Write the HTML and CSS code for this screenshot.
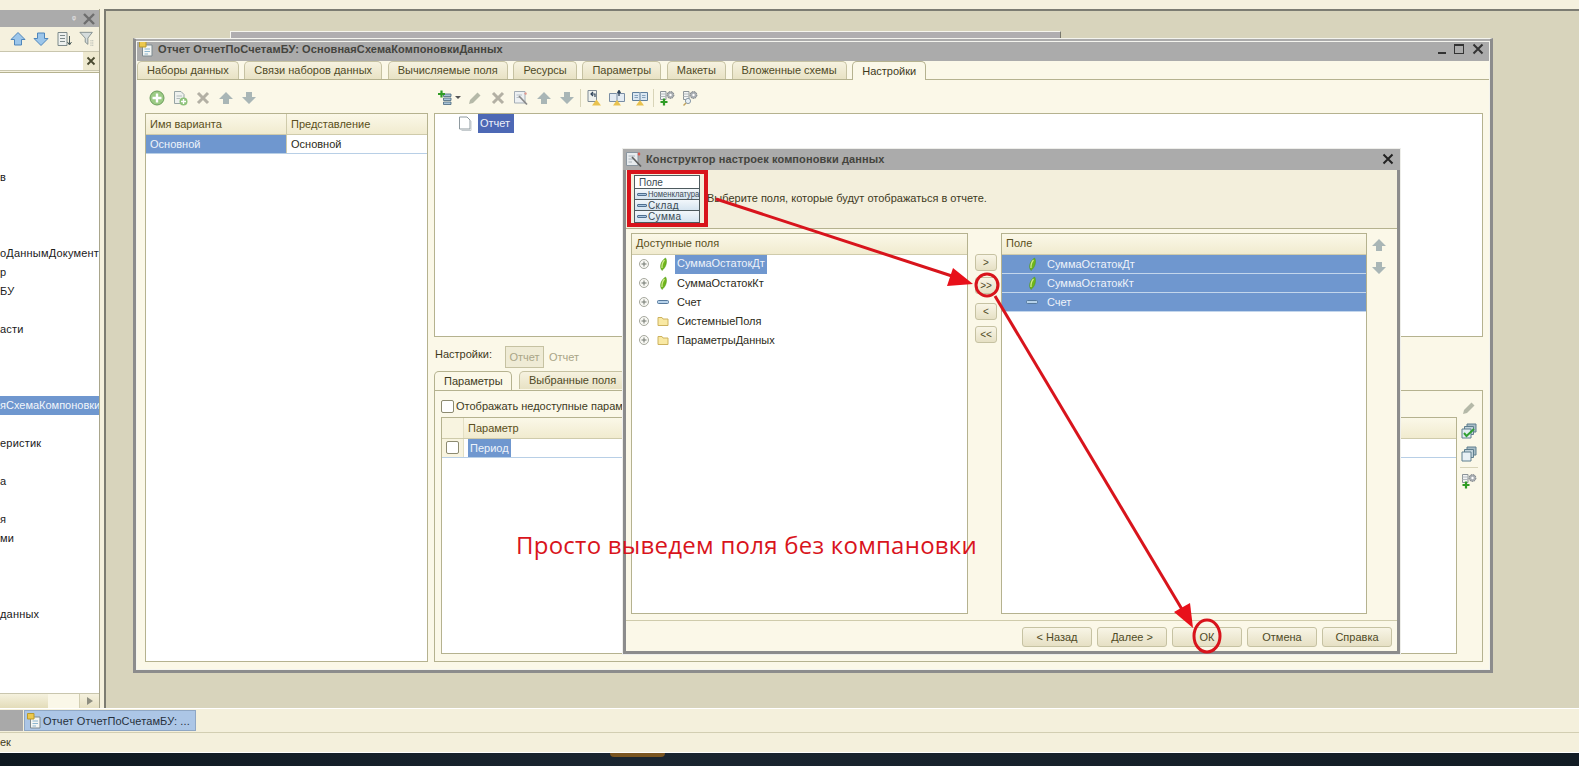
FILE: index.html
```html
<!DOCTYPE html>
<html lang="ru">
  <head>
    <meta charset="UTF-8" />
    <title>Отчет ОтчетПоСчетамБУ</title>
    <link rel="stylesheet" href="styles.css">
  </head>

  <body>
    <svg class="defs" width="0" height="0">
      <defs>
        <symbol id="i-blue-up" viewBox="0 0 16 16"><path d="M8 1.500 15 8.500H11.500V14H4.500V8.500H1Z" fill="#9cc6ea" stroke="#4f86bb"/></symbol>
        <symbol id="i-blue-down" viewBox="0 0 16 16"><path d="M8 14.500 15 7.500H11.500V2H4.500V7.500H1Z" fill="#9cc6ea" stroke="#4f86bb"/></symbol>
        <symbol id="i-list" viewBox="0 0 16 16"><path d="M2 1.500H11V14.500H2Z" fill="#eef1ee" stroke="#7d8a8a"/><path d="M4 4.500H9M4 7.500H9M4 10.500H9" stroke="#7d8a8a"/><path d="M13.500 5V13M11.500 11 13.500 14 15.500 11" fill="none" stroke="#4a5a5a"/></symbol>
        <symbol id="i-funnel" viewBox="0 0 18 18"><path d="M1 1.500H15L10 8V15L7 12.500V8Z" fill="#d5dcdc" stroke="#7d8a8a"/><path d="M13 11H17M13 13.500H17M13 16H17" stroke="#8c9898" stroke-dasharray="1 1"/></symbol>
        <symbol id="i-add" viewBox="0 0 16 16"><circle cx="8" cy="8" r="7" fill="#9ccb84" stroke="#6c9e5c"/><path d="M8 3.500V12.500M3.500 8H12.500" stroke="#fff" stroke-width="2.400"/></symbol>
        <symbol id="i-docadd" viewBox="0 0 16 16"><path d="M2.500 1.500H9L12 4.500V13.500H2.500Z" fill="#eef1ee" stroke="#98a5a5"/><path d="M4.500 6H10M4.500 8.500H8" stroke="#b3bcbc"/><circle cx="11.500" cy="11.500" r="4" fill="#8ec27a"/><path d="M11.500 9V14M9 11.500H14" stroke="#fff" stroke-width="1.400"/></symbol>
        <symbol id="i-del" viewBox="0 0 16 16"><path d="M3 3 13 13M13 3 3 13" stroke="#b3b0a4" stroke-width="3"/></symbol>
        <symbol id="i-up" viewBox="0 0 16 16"><path d="M8 2 15 9H11V14H5V9H1Z" fill="#a9b6b6"/></symbol>
        <symbol id="i-down" viewBox="0 0 16 16"><path d="M8 14 15 7H11V2H5V7H1Z" fill="#a9b6b6"/></symbol>
        <symbol id="i-tree-add" viewBox="0 0 16 16"><path d="M6.500 4H14V6.500H6.500ZM6.500 8H14V10.500H6.500ZM6.500 12H14V14.500H6.500Z" fill="#a9c4d8" stroke="#47667c" stroke-width=".8"/><path d="M4.500 .5V7.500M1 4H8" stroke="#2f9c25" stroke-width="2.200"/></symbol>
        <symbol id="i-pencil" viewBox="0 0 16 16"><path d="M3 10 10.500 2.500 13.500 5.500 6 13 2 14Z" fill="#b5b9a8"/></symbol>
        <symbol id="i-wand" viewBox="0 0 16 16"><path d="M1.500 1.500H12V13H1.500Z" fill="#eef1f3" stroke="#a4adb5"/><path d="M3.500 5H9M3.500 7.500H7" stroke="#b9c2c9"/><path d="M6 6 14 14.500" stroke="#8a8a8a" stroke-width="1.800"/><path d="M13 2 14 4 12.500 5 11 3.500Z" fill="#e39a8f"/></symbol>
        <symbol id="i-doc-a" viewBox="0 0 16 16"><path d="M2 .5H10.500V11.500H2Z" fill="#eef1ee" stroke="#7f8b95"/><path d="M9 7V4H5.500M7 2 5 4 7 6" fill="none" stroke="#31465c" stroke-width="1.200"/><path d="M6 15.500 10.500 9.500 15 15.500Z" fill="#e9c24e"/></symbol>
        <symbol id="i-doc-b" viewBox="0 0 16 16"><path d="M.5 3.500H7.500L8 4 8.500 3.500H15.500V11.500H.5Z" fill="#e4ecf3" stroke="#7a8ea4"/><path d="M8 4V11" stroke="#7a8ea4"/><path d="M4 15.500 8 10 12 15.500Z" fill="#e9c24e"/><path d="M10 6V1.500M8.500 3 10 .5 11.500 3" fill="none" stroke="#31465c" stroke-width="1.300"/></symbol>
        <symbol id="i-doc-c" viewBox="0 0 16 16"><path d="M.5 2.500H7.500L8 3 8.500 2.500H15.500V10.500H.5Z" fill="#dbe8f2" stroke="#5f7f9c"/><path d="M8 3V10.500" stroke="#5f7f9c"/><path d="M4 15.500 8 10 12 15.500Z" fill="#e9c24e"/><path d="M2.500 5.500H6M10 5.500H13.500M2.500 7.500H6M10 7.500H13.500" stroke="#86a2bb"/></symbol>
        <symbol id="i-gear-add" viewBox="0 0 16 16"><path d="M1.500 1.500H7V9.500H1.500Z" fill="#f2f4f4" stroke="#8c9498"/><path d="M1.500 4H7M1.500 6.500H7" stroke="#b4babd"/><circle cx="11.500" cy="5" r="3.400" fill="#a9aeb2" stroke="#777d82" stroke-dasharray="1.500 .8"/><circle cx="11.500" cy="5" r="1.200" fill="#fff"/><path d="M5 8.500V15.500M1.500 12H8.500" stroke="#2f9c25" stroke-width="2.200"/></symbol>
        <symbol id="i-gear-find" viewBox="0 0 16 16"><path d="M1.500 1.500H7V9.500H1.500Z" fill="#f2f4f4" stroke="#8c9498"/><path d="M1.500 4H7M1.500 6.500H7" stroke="#b4babd"/><circle cx="11.500" cy="5" r="3.400" fill="#a9aeb2" stroke="#777d82" stroke-dasharray="1.500 .8"/><circle cx="11.500" cy="5" r="1.200" fill="#fff"/><circle cx="6" cy="11" r="2.600" fill="#e8f0f5" stroke="#8c9ca8"/><path d="M4 13 1.500 15.500" stroke="#c2a25a" stroke-width="1.400"/></symbol>
        <symbol id="i-check" viewBox="0 0 16 16"><path d="M6 1H15V9H6Z" fill="#a8bdc6" stroke="#5f7f8e"/><path d="M3.500 3.500H12.500V11.500H3.500Z" fill="#c1d2da" stroke="#5f7f8e"/><path d="M1 6H10V15H1Z" fill="#e3edf1" stroke="#5f7f8e"/><path d="M3 10 5.500 13 13 6" fill="none" stroke="#30a030" stroke-width="2"/></symbol>
        <symbol id="i-copy" viewBox="0 0 16 16"><path d="M6 1H15V9H6Z" fill="#a8bdc6" stroke="#5f7f8e"/><path d="M3.500 3.500H12.500V11.500H3.500Z" fill="#c1d2da" stroke="#5f7f8e"/><path d="M1 6H10V15H1Z" fill="#e9f1f5" stroke="#5f7f8e"/></symbol>
        <symbol id="i-file" viewBox="0 0 16 16"><path d="M2.500 1H10L13 4V13H2.500Z" fill="#fff" stroke="#8f9aa0"/><path d="M4.500 14.500H14V5" fill="none" stroke="#c5cbce"/></symbol>
        <symbol id="i-report" viewBox="0 0 16 16"><path d="M3.500 4H13V15H3.500Z" fill="#f4f6f3" stroke="#7c8a90"/><path d="M5.500 8H11M5.500 10.500H11M5.500 13H9" stroke="#8cb6cf"/><path d="M.5 .5H7V6H.5Z" fill="#ecc84d" stroke="#b99a2c"/></symbol>
        <symbol id="i-magic" viewBox="0 0 16 16"><path d="M.5 1.500H12V14.500H.5Z" fill="#e7ebee" stroke="#8a96a0"/><path d="M2.500 5H9M2.500 8H7M2.500 11H6" stroke="#aab4bc"/><path d="M6 6 15 15.500" stroke="#5d5d5d" stroke-width="1.700"/><path d="M13 1 14.500 3 13 5 11.500 3Z" fill="#d9554a"/></symbol>
        <symbol id="i-res" viewBox="0 0 16 16"><path d="M10.500 2C12.500 4.500 11.500 11 7 14.500 4 11 6 5 10.500 2Z" fill="#6fb51c" stroke="#4d9416" stroke-width=".5"/><path d="M9.500 4C7.500 6 6.800 9 7 12" stroke="#cfe98e" stroke-width="1.300" fill="none"/></symbol>
        <symbol id="i-field" viewBox="0 0 16 16"><rect x="2.500" y="6.500" width="11" height="3" rx="1" fill="#b7d2ea" stroke="#55789c"/></symbol>
        <symbol id="i-folder" viewBox="0 0 16 16"><path d="M3 4.500H7L8 6H13V12.500H3Z" fill="#f9e9a4" stroke="#cdb25e"/></symbol>
        <symbol id="i-plus" viewBox="0 0 16 16"><circle cx="8" cy="8" r="4.500" fill="#f8f8f4" stroke="#a6a89e"/><path d="M5.500 8H10.500M8 5.500V10.500" stroke="#70766e"/></symbol>
      </defs>
    </svg>

    <div class="app">
      <div class="top-strip"></div>

      <div class="work">
        <!-- левая панель -->
        <div class="side">
          <div class="side-title">
            <span class="pin">ᵠ</span>
            <svg class="side-close" viewBox="0 0 14 14"><path d="M2 2 12 12M12 2 2 12" stroke="#6e6e6e" stroke-width="2.400"/></svg>
          </div>
          <div class="side-tools">
            <svg class="ico"><use href="#i-blue-up"/></svg>
            <svg class="ico"><use href="#i-blue-down"/></svg>
            <svg class="ico"><use href="#i-list"/></svg>
            <svg class="ico"><use href="#i-funnel"/></svg>
          </div>
          <div class="side-search">
            <svg class="search-x" viewBox="0 0 10 10"><path d="M1.500 1.500 8.500 8.500M8.500 1.500 1.500 8.500" stroke="#4a4a30" stroke-width="1.800"/></svg>
          </div>
          <div class="side-tree">
            <div class="tree-row"></div>
            <div class="tree-row"></div>
            <div class="tree-row"></div>
            <div class="tree-row"></div>
            <div class="tree-row"></div>
            <div class="tree-row">в</div>
            <div class="tree-row"></div>
            <div class="tree-row"></div>
            <div class="tree-row"></div>
            <div class="tree-row">оДаннымДокумент</div>
            <div class="tree-row">р</div>
            <div class="tree-row">БУ</div>
            <div class="tree-row"></div>
            <div class="tree-row">асти</div>
            <div class="tree-row"></div>
            <div class="tree-row"></div>
            <div class="tree-row"></div>
            <div class="tree-row tree-sel">яСхемаКомпоновки</div>
            <div class="tree-row"></div>
            <div class="tree-row">еристик</div>
            <div class="tree-row"></div>
            <div class="tree-row">а</div>
            <div class="tree-row"></div>
            <div class="tree-row">я</div>
            <div class="tree-row">ми</div>
            <div class="tree-row"></div>
            <div class="tree-row"></div>
            <div class="tree-row"></div>
            <div class="tree-row">данных</div>
          </div>
          <div class="side-scroll">
            <div class="scroll-thumb"></div>
            <div class="scroll-track"></div>
            <div class="scroll-btn"><span class="scroll-arrow"></span></div>
          </div>
        </div>

        <!-- рабочая область -->
        <div class="mdi">
          <div class="back-win"></div>

          <div class="win">
            <div class="win-title">
              <svg class="ico"><use href="#i-report"/></svg>
              <span class="win-name">Отчет ОтчетПоСчетамБУ: ОсновнаяСхемаКомпоновкиДанных</span>
              <div class="win-btns">
                <span class="min-btn"></span>
                <span class="max-btn"></span>
                <svg class="close-btn" viewBox="0 0 12 12"><path d="M1.500 1.500 10.500 10.500M10.500 1.500 1.500 10.500" stroke="#333" stroke-width="2"/></svg>
              </div>
            </div>
            <div class="tabs">
              <div class="tab">Наборы данных</div>
              <div class="tab">Связи наборов данных</div>
              <div class="tab">Вычисляемые поля</div>
              <div class="tab">Ресурсы</div>
              <div class="tab">Параметры</div>
              <div class="tab">Макеты</div>
              <div class="tab">Вложенные схемы</div>
              <div class="tab tab-on">Настройки</div>
            </div>
            <div class="pane">
              <div class="variants">
                <div class="toolbar">
                  <svg class="ico"><use href="#i-add"/></svg>
                  <svg class="ico"><use href="#i-docadd"/></svg>
                  <svg class="ico"><use href="#i-del"/></svg>
                  <svg class="ico"><use href="#i-up"/></svg>
                  <svg class="ico"><use href="#i-down"/></svg>
                </div>
                <div class="grid variants-grid">
                  <div class="grid-head">
                    <div class="cell cell-name">Имя варианта</div>
                    <div class="cell">Представление</div>
                  </div>
                  <div class="grid-row">
                    <div class="cell cell-name cell-sel">Основной</div>
                    <div class="cell">Основной</div>
                  </div>
                </div>
              </div>

              <div class="settings">
                <div class="toolbar toolbar-wide">
                  <svg class="ico"><use href="#i-tree-add"/></svg>
                  <span class="drop"></span>
                  <svg class="ico"><use href="#i-pencil"/></svg>
                  <svg class="ico"><use href="#i-del"/></svg>
                  <svg class="ico"><use href="#i-wand"/></svg>
                  <svg class="ico"><use href="#i-up"/></svg>
                  <svg class="ico"><use href="#i-down"/></svg>
                  <span class="tool-sep"></span>
                  <svg class="ico"><use href="#i-doc-a"/></svg>
                  <svg class="ico"><use href="#i-doc-b"/></svg>
                  <svg class="ico"><use href="#i-doc-c"/></svg>
                  <span class="tool-sep"></span>
                  <svg class="ico"><use href="#i-gear-add"/></svg>
                  <svg class="ico"><use href="#i-gear-find"/></svg>
                </div>
                <div class="struct-box">
                  <div class="struct-row">
                    <svg class="ico"><use href="#i-file"/></svg>
                    <span class="struct-sel">Отчет</span>
                  </div>
                </div>
                <div class="crumbs">
                  <span class="crumb-label">Настройки:</span>
                  <span class="crumb-box">Отчет</span>
                  <span class="crumb-text">Отчет</span>
                </div>
                <div class="sub-tabs">
                  <div class="tab tab-on sub-first">Параметры</div>
                  <div class="tab">Выбранные поля</div>
                </div>
                <div class="sub-pane">
                  <div class="params">
                    <label class="show-row"><span class="check"></span>Отображать недоступные параметры</label>
                    <div class="grid params-grid">
                      <div class="grid-head">
                        <div class="cell cell-mark"></div>
                        <div class="cell">Параметр</div>
                      </div>
                      <div class="grid-row">
                        <div class="cell cell-mark"><span class="check"></span></div>
                        <div class="cell cell-period"><span class="period-sel">Период</span></div>
                      </div>
                    </div>
                  </div>
                  <div class="side-icons">
                    <svg class="ico"><use href="#i-pencil"/></svg>
                    <svg class="ico"><use href="#i-check"/></svg>
                    <svg class="ico"><use href="#i-copy"/></svg>
                    <span class="icons-sep"></span>
                    <svg class="ico"><use href="#i-gear-add"/></svg>
                  </div>
                </div>
              </div>
            </div>
          </div>

          <!-- диалог конструктора -->
          <div class="dialog">
            <div class="dlg-title">
              <svg class="ico"><use href="#i-magic"/></svg>
              <span class="win-name">Конструктор настроек компоновки данных</span>
              <svg class="dlg-close" viewBox="0 0 12 12"><path d="M1.500 1.500 10.500 10.500M10.500 1.500 1.500 10.500" stroke="#222" stroke-width="2"/></svg>
            </div>
            <div class="dlg-head">
              <div class="sample">
                <div class="sample-top">Поле</div>
                <div class="sample-row"><span class="sample-dash"></span><span class="sample-narrow">Номенклатура</span></div>
                <div class="sample-row"><span class="sample-dash"></span>Склад</div>
                <div class="sample-row sample-last"><span class="sample-dash"></span>Сумма</div>
              </div>
              <span class="dlg-hint">Выберите поля, которые будут отображаться в отчете.</span>
            </div>
            <div class="dlg-main">
              <div class="list list-left">
                <div class="list-head">Доступные поля</div>
                <div class="list-row">
                  <svg class="ico"><use href="#i-plus"/></svg>
                  <svg class="ico ico-gap"><use href="#i-res"/></svg>
                  <span class="item-sel">СуммаОстатокДт</span>
                </div>
                <div class="list-row">
                  <svg class="ico"><use href="#i-plus"/></svg>
                  <svg class="ico ico-gap"><use href="#i-res"/></svg>
                  <span class="item">СуммаОстатокКт</span>
                </div>
                <div class="list-row">
                  <svg class="ico"><use href="#i-plus"/></svg>
                  <svg class="ico ico-gap"><use href="#i-field"/></svg>
                  <span class="item">Счет</span>
                </div>
                <div class="list-row">
                  <svg class="ico"><use href="#i-plus"/></svg>
                  <svg class="ico ico-gap"><use href="#i-folder"/></svg>
                  <span class="item">СистемныеПоля</span>
                </div>
                <div class="list-row">
                  <svg class="ico"><use href="#i-plus"/></svg>
                  <svg class="ico ico-gap"><use href="#i-folder"/></svg>
                  <span class="item">ПараметрыДанных</span>
                </div>
              </div>
              <div class="mid-btns">
                <div class="mini-btn">&gt;</div>
                <div class="mini-btn">&gt;&gt;</div>
                <div class="mini-btn mini-far">&lt;</div>
                <div class="mini-btn">&lt;&lt;</div>
              </div>
              <div class="list list-right">
                <div class="list-head">Поле</div>
                <div class="pick-row">
                  <svg class="ico"><use href="#i-res"/></svg>
                  <span class="item">СуммаОстатокДт</span>
                </div>
                <div class="pick-row">
                  <svg class="ico"><use href="#i-res"/></svg>
                  <span class="item">СуммаОстатокКт</span>
                </div>
                <div class="pick-row">
                  <svg class="ico"><use href="#i-field"/></svg>
                  <span class="item">Счет</span>
                </div>
              </div>
              <div class="order-btns">
                <svg class="ico"><use href="#i-up"/></svg>
                <svg class="ico"><use href="#i-down"/></svg>
              </div>
            </div>
            <div class="dlg-foot">
              <div class="btn">&lt; Назад</div>
              <div class="btn">Далее &gt;</div>
              <div class="btn">ОК</div>
              <div class="btn">Отмена</div>
              <div class="btn">Справка</div>
            </div>
          </div>
        </div>
      </div>

      <div class="taskbar">
        <div class="task-prev"></div>
        <div class="task-item">
          <svg class="ico"><use href="#i-report"/></svg>
          <span>Отчет ОтчетПоСчетамБУ: ...</span>
        </div>
      </div>
      <div class="status">ек</div>
      <div class="desktop"><span class="desk-spot"></span></div>

      <!-- пометки поверх скриншота -->
      <svg class="marks" viewBox="0 0 1579 766">
        <rect x="629" y="172" width="77" height="53" fill="none" stroke="#d8141c" stroke-width="4"/>
        <path d="M716 199 955 277" stroke="#d8141c" stroke-width="3"/>
        <path d="M973 284 947 286 953 268Z" fill="#e8101a"/>
        <ellipse cx="987" cy="285" rx="11" ry="11" fill="none" stroke="#d8141c" stroke-width="3"/>
        <path d="M995 296 1183 611" stroke="#d8141c" stroke-width="3"/>
        <path d="M1193 628 1174 612 1190 603Z" fill="#e8101a"/>
        <ellipse cx="1207" cy="636" rx="13" ry="16" fill="none" stroke="#d8141c" stroke-width="3"/>
      </svg>
      <div class="note">Просто выведем поля без компановки</div>
    </div>
  </body>
</html>
```

FILE: styles.css
```css
* {
  margin: 0;
  padding: 0;
  box-sizing: border-box;
}

body {
  width: 1579px;
  height: 766px;
  overflow: hidden;
  font-family: "Liberation Sans", Arial, sans-serif;
  font-size: 11px;
  color: #2c2a18;
  background-color: #10181f;
}

.defs {
  position: absolute;
}

.ico {
  width: 16px;
  height: 16px;
  flex: none;
}

.app {
  position: relative;
  width: 1579px;
  height: 766px;
  display: flex;
  flex-direction: column;
}

.top-strip {
  height: 9px;
  background-color: #f5f1de;
}

.work {
  height: 699px;
  display: flex;
  background-color: #f5f1de;
}

/* левая панель */
.side {
  width: 100px;
  display: flex;
  flex-direction: column;
  border-right: 1px solid #a9a68c;
}

.side-title {
  height: 17px;
  margin-top: 1px;
  background-color: #ababab;
  display: flex;
  align-items: center;
  justify-content: flex-end;
  padding-right: 3px;
}

.pin {
  color: #e8e8e8;
  font-size: 9px;
  margin-right: 6px;
}

.side-close {
  width: 14px;
  height: 14px;
}

.side-tools {
  height: 24px;
  display: flex;
  align-items: center;
  justify-content: flex-end;
  gap: 7px;
  padding-right: 4px;
}

.side-search {
  height: 20px;
  background-color: #fff;
  border-top: 1px solid #c9c6ae;
  border-bottom: 1px solid #c9c6ae;
  display: flex;
  justify-content: flex-end;
}

.search-x {
  width: 16px;
  height: 18px;
  padding: 4px 3px;
  background-color: #eee9cf;
}

.side-tree {
  flex: 1;
  margin-top: 1px;
  background-color: #fff;
  border-top: 1px solid #b5b28f;
  overflow: hidden;
}

.tree-row {
  height: 19px;
  line-height: 19px;
  letter-spacing: .2px;
  white-space: nowrap;
  overflow: hidden;
  color: #20201a;
}

.tree-sel {
  letter-spacing: 0;
  background-color: #6f97cf;
  color: #f2f6fb;
}

.side-scroll {
  height: 15px;
  margin-bottom: 0;
  display: flex;
  background-color: #f4f0dc;
  border-top: 1px solid #c9c6ae;
}

.scroll-thumb {
  width: 48px;
  background: linear-gradient(#f5f1de, #e3dcb9);
}

.scroll-track {
  width: 31px;
  background-color: #faf7e8;
}

.scroll-btn {
  flex: 1;
  display: flex;
  align-items: center;
  justify-content: center;
  background: linear-gradient(#f5f1de, #e6e0c2);
  border-left: 1px solid #d2ceb2;
}

.scroll-arrow {
  border-left: 6px solid #8e8e80;
  border-top: 4px solid transparent;
  border-bottom: 4px solid transparent;
}

/* рабочая область */
.mdi {
  position: relative;
  flex: 1;
  margin-left: 4px;
  background-color: #d8d4bc;
  border-left: 2px solid #7c7c72;
  border-top: 2px solid #7c7c72;
}

.back-win {
  position: absolute;
  left: 124px;
  top: 20px;
  width: 831px;
  height: 10px;
  background-color: #b0aeb0;
  border-top: 1px solid #f6f6ee;
  border-left: 1px solid #f6f6ee;
  border-right: 1px solid #77776c;
}

.win {
  position: absolute;
  left: 27px;
  top: 27px;
  width: 1360px;
  height: 635px;
  display: flex;
  flex-direction: column;
  background-color: #fbf8e8;
  border: 3px solid #8c8c8c;
  border-top: 1px solid #f4f4ee;
  outline: 1px solid #f4f4ee;
  outline-offset: -4px;
}

.win-title {
  height: 22px;
  flex: none;
  background-color: #ababab;
  display: flex;
  align-items: center;
  padding: 0 0 2px 3px;
  gap: 3px;
}

.win-name {
  font-weight: bold;
  letter-spacing: .1px;
  color: #44443e;
}

.win-btns {
  margin-left: auto;
  display: flex;
  align-items: center;
  gap: 8px;
  padding-right: 6px;
}

.min-btn {
  width: 8px;
  height: 2px;
  margin-top: 7px;
  background-color: #333;
}

.max-btn {
  width: 10px;
  height: 10px;
  border: 1px solid #333;
  border-top-width: 2px;
}

.close-btn {
  width: 12px;
  height: 12px;
}

.tabs {
  height: 19px;
  flex: none;
  display: flex;
  align-items: flex-end;
  gap: 5.7px;
  padding-left: 1px;
  border-bottom: 1px solid #b5b28f;
}

.tab {
  height: 18px;
  line-height: 17px;
  padding: 0 9px;
  flex: none;
  white-space: nowrap;
  color: #4f4a26;
  background: linear-gradient(#f6f2e0, #e8e2c4);
  border: 1px solid #c6c2a2;
  border-bottom: 0;
  border-radius: 5px 5px 0 0;
}

.tab-on {
  height: 19px;
  margin-bottom: -1px;
  line-height: 18px;
  background: #fbf8e8;
  border-color: #b5b28f;
  color: #3e3a1c;
}

.pane {
  flex: 1;
  display: flex;
  gap: 6px;
  padding: 0 7px 8px 8px;
  border-left: 1px solid #c6c2a2;
  margin-left: 0;
  min-height: 0;
}

.variants {
  width: 283px;
  display: flex;
  flex-direction: column;
}

.toolbar {
  height: 33px;
  flex: none;
  display: flex;
  align-items: center;
  gap: 7px;
  padding: 2px 0 0 4px;
}

.toolbar-wide {
  padding-left: 3px;
}

.drop {
  width: 0;
  height: 0;
  margin-left: -5px;
  margin-right: -1px;
  border-top: 3px solid #555;
  border-left: 3px solid transparent;
  border-right: 3px solid transparent;
}

.tool-sep {
  width: 1px;
  height: 18px;
  margin: 0 -2px;
  background-color: #d8d4b8;
}

.grid {
  background-color: #fff;
  border: 1px solid #b5b28f;
}

.variants-grid {
  flex: 1;
}

.grid-head {
  height: 21px;
  display: flex;
  line-height: 20px;
  color: #5a4f20;
  background: linear-gradient(#fbf8e8, #f1ebcf);
  border-bottom: 1px solid #cfcbab;
}

.grid-row {
  height: 19px;
  display: flex;
  line-height: 18px;
  border-bottom: 1px solid #b8cfe6;
}

.cell {
  flex: 1;
  padding-left: 4px;
  white-space: nowrap;
  overflow: hidden;
}

.cell-name {
  flex: none;
  width: 141px;
  border-right: 1px solid #cfcbab;
}

.cell-sel {
  background-color: #6f97cf;
  color: #eef3fa;
}

.settings {
  flex: 1;
  display: flex;
  flex-direction: column;
  min-width: 0;
}

.struct-box {
  height: 224px;
  flex: none;
  background-color: #fff;
  border: 1px solid #b5b28f;
}

.struct-row {
  height: 19px;
  display: flex;
  align-items: center;
  gap: 5px;
  padding-left: 22px;
  margin-top: 0;
}

.struct-sel {
  height: 19px;
  padding: 0 4px 0 2px;
  line-height: 18px;
  background-color: #4d68b5;
  color: #eef1fa;
}

.crumbs {
  height: 36px;
  flex: none;
  display: flex;
  align-items: center;
  padding-top: 4px;
  color: #3e3a1c;
}

.crumb-label {
  width: 71px;
  padding-left: 1px;
  margin-bottom: 6px;
}

.crumb-box {
  width: 39px;
  height: 22px;
  line-height: 20px;
  text-align: center;
  color: #a9a587;
  background-color: #efebd5;
  border: 1px solid #c6c2a2;
}

.crumb-text {
  margin-left: 5px;
  color: #a9a587;
}

.sub-tabs {
  height: 17px;
  flex: none;
  display: flex;
  align-items: flex-end;
  gap: 7px;
  border-bottom: 1px solid transparent;
}

.sub-first {
  width: 78px;
  border-color: #b5b28f;
}

.sub-pane {
  flex: 1;
  display: flex;
  min-height: 0;
  padding: 9px 0 7px 6px;
  border: 1px solid #b5b28f;
}

.params {
  flex: 1;
  display: flex;
  flex-direction: column;
  min-width: 0;
}

.show-row {
  height: 17px;
  flex: none;
  display: flex;
  align-items: flex-start;
  gap: 2px;
  line-height: 12px;
  color: #3e3a1c;
}

.check {
  display: block;
  width: 13px;
  height: 13px;
  flex: none;
  background-color: #fff;
  border: 1px solid #8c8a70;
  border-radius: 2px;
}

.params-grid {
  flex: 1;
}

.cell-mark {
  flex: none;
  width: 22px;
  padding: 2px 0 0 4px;
  border-right: 1px solid #e3dfc4;
  background-color: #f8f4e0;
}

.cell-period {
  padding-left: 4px;
}

.period-sel {
  display: inline-block;
  height: 18px;
  padding: 0 2px;
  background-color: #6f97cf;
  color: #eef3fa;
}

.side-icons {
  width: 26px;
  flex: none;
  margin-left: -1px;
  display: flex;
  flex-direction: column;
  align-items: center;
  gap: 7px;
}

.icons-sep {
  width: 18px;
  height: 1px;
  margin: -2px 0;
  background-color: #d8d4b8;
}

/* диалог */
.dialog {
  position: absolute;
  left: 517px;
  top: 138px;
  width: 777px;
  height: 505px;
  display: flex;
  flex-direction: column;
  background-color: #fbf8e8;
  border: 3px solid #8c8c8c;
  border-top: 0;
  box-shadow: 0 0 0 1px #eeeeea;
}

.dlg-title {
  height: 21px;
  flex: none;
  margin: 0 -3px;
  padding: 0 6px 2px 3px;
  display: flex;
  align-items: center;
  gap: 4px;
  background-color: #ababab;
}

.dlg-close {
  margin-left: auto;
  width: 12px;
  height: 12px;
}

.dlg-head {
  height: 59px;
  flex: none;
  display: flex;
  align-items: center;
  gap: 7px;
  padding-left: 8px;
  background-color: #f3efdc;
  border-bottom: 1px solid #b5b28f;
}

.sample {
  width: 66px;
  height: 48px;
  flex: none;
  background-color: #fff;
  border: 1px solid #4e5a5e;
  color: #3a4a54;
}

.sample-top {
  height: 13px;
  padding-left: 4px;
  line-height: 13px;
  font-size: 10px;
  border-bottom: 1px solid #4e5a5e;
}

.sample-row {
  height: 11px;
  display: flex;
  align-items: center;
  gap: 1px;
  padding-left: 2px;
  font-size: 10px;
  line-height: 11px;
  letter-spacing: .4px;
  background: linear-gradient(#f2f7fb, #d5e4f0);
  border-bottom: 1px solid #4e5a5e;
}

.sample-last {
  border-bottom: 0;
}

.sample-dash {
  width: 10px;
  height: 3px;
  flex: none;
  background-color: #a9c6e0;
  border: 1px solid #4f6f8f;
  border-radius: 1px;
}

.sample-narrow {
  display: inline-block;
  font-size: 9px;
  letter-spacing: 0;
  white-space: nowrap;
  transform: scaleX(.85);
  transform-origin: left center;
}

.dlg-hint {
  margin-bottom: 2px;
  color: #3e3a1c;
}

.dlg-main {
  flex: 1;
  display: flex;
  min-height: 0;
  padding: 4px 0 6px 5px;
}

.list {
  background-color: #fff;
  border: 1px solid #b5b28f;
}

.list-left {
  width: 337px;
}

.list-right {
  width: 366px;
}

.list-head {
  height: 21px;
  padding-left: 4px;
  line-height: 18px;
  color: #5a4f20;
  background: linear-gradient(#fbf8e8, #f1ebcf);
  border-bottom: 1px solid #cfcbab;
}

.list-row {
  height: 19px;
  display: flex;
  align-items: center;
  padding: 0 0 1px 4px;
}

.ico-gap {
  margin-left: 3px;
  margin-right: 4px;
}

.item {
  padding: 0 2px;
  white-space: nowrap;
}

.item-sel {
  align-self: flex-start;
  height: 19px;
  padding: 0 2px;
  line-height: 17px;
  background-color: #6f97cf;
  color: #eef3fa;
}

.mid-btns {
  width: 22px;
  flex: none;
  margin: 0 4px 0 7px;
  padding-top: 21px;
  display: flex;
  flex-direction: column;
  gap: 6px;
}

.mini-btn {
  height: 17px;
  line-height: 15px;
  text-align: center;
  font-size: 10px;
  color: #4f4a26;
  background: linear-gradient(#f8f5e6, #e6e0c4);
  border: 1px solid #c6c2a2;
  border-radius: 3px;
}

.mini-far {
  margin-top: 3px;
}

.pick-row {
  height: 19px;
  display: flex;
  align-items: center;
  gap: 5px;
  padding-left: 22px;
  background-color: #6f97cf;
  color: #eef3fa;
  border-bottom: 1px solid #c3d6ec;
}

.order-btns {
  width: 26px;
  flex: none;
  display: flex;
  flex-direction: column;
  align-items: center;
  gap: 7px;
  margin-left: -1px;
  padding-top: 4px;
}

.dlg-foot {
  height: 31px;
  flex: none;
  display: flex;
  justify-content: flex-end;
  gap: 5px;
  padding: 6px 5px 0 0;
  border-top: 1px solid #cfcbab;
}

.btn {
  width: 70px;
  height: 20px;
  line-height: 18px;
  text-align: center;
  color: #4f4a26;
  background: linear-gradient(#f8f5e6, #e6e0c4);
  border: 1px solid #c6c2a2;
  border-radius: 3px;
}

/* нижние полосы */
.taskbar {
  height: 25px;
  display: flex;
  align-items: center;
  gap: 1px;
  background-color: #f4f0dc;
  border-top: 1px solid #fff;
  border-bottom: 1px solid #d2ceb2;
}

.task-prev {
  width: 23px;
  height: 21px;
  background-color: #a9a9a9;
}

.task-item {
  width: 172px;
  height: 21px;
  display: flex;
  align-items: center;
  padding-left: 2px;
  letter-spacing: .1px;
  background-color: #acc6e6;
  border: 1px solid #8fa7c4;
  color: #26303c;
  white-space: nowrap;
  overflow: hidden;
}

.status {
  height: 20px;
  line-height: 19px;
  background-color: #f4f0dc;
  color: #3e3a1c;
  border-bottom: 1px solid #fff;
}

.desktop {
  flex: 1;
  position: relative;
  background: linear-gradient(90deg, #0e1820, #1a2530 40%, #121c24);
}

.desk-spot {
  position: absolute;
  left: 610px;
  top: 0;
  width: 55px;
  height: 4px;
  background-color: #7a5520;
  border-radius: 0 0 30px 30px;
}

/* пометки */
.marks {
  position: absolute;
  left: 0;
  top: 0;
  width: 1579px;
  height: 766px;
  pointer-events: none;
}

.note {
  position: absolute;
  left: 516px;
  top: 529px;
  font-family: "Open Sans", sans-serif;
  font-size: 24px;
  line-height: 32px;
  letter-spacing: .25px;
  color: #d9141c;
  white-space: nowrap;
}
```
